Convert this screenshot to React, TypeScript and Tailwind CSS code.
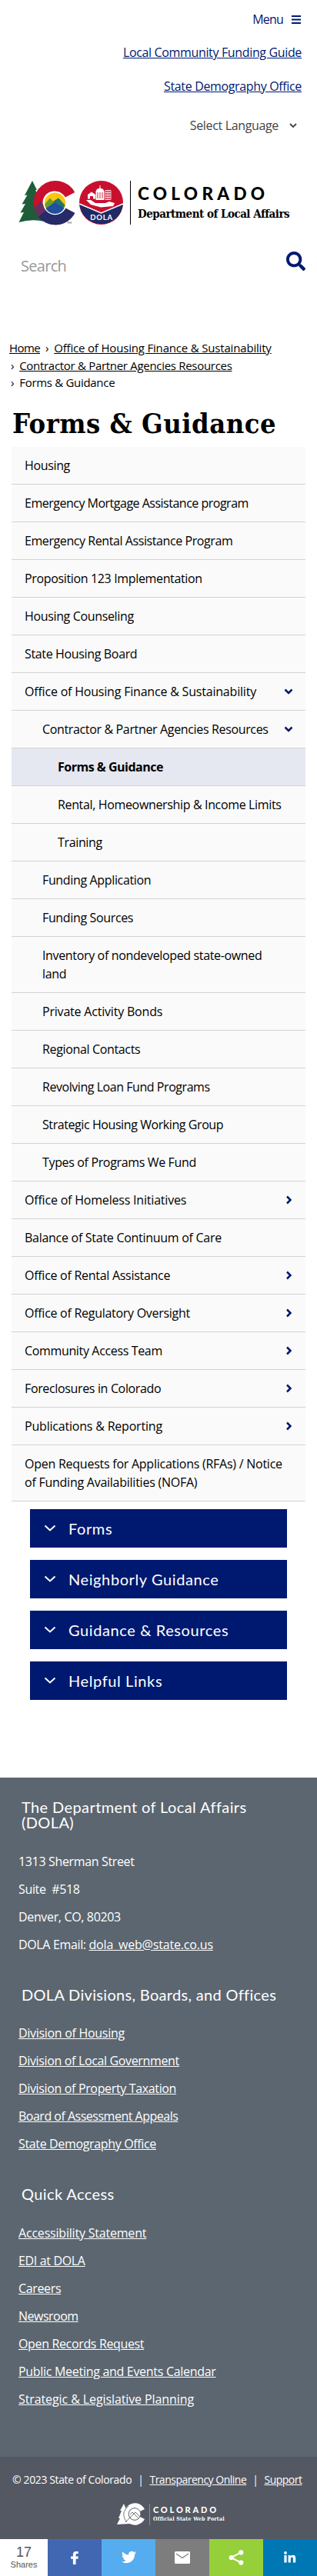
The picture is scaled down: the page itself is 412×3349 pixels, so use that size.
import React from "react";

const body = "font-['Open_Sans','Noto_Sans',sans-serif]";
const museo = "font-['Lato','Open_Sans',sans-serif]";
const slab = "font-['DejaVu_Serif_Condensed','DejaVu_Serif',serif]";

type Item = { label: string; level?: 0 | 1 | 2; icon?: "down" | "right"; active?: boolean; tracking?: string };

const tight = "tracking-[-0.500px]";
const normal = "tracking-[-0.350px]";
const loose = "tracking-[-0.200px]";

const items: Item[] = [
  { label: "Housing" },
  { label: "Emergency Mortgage Assistance program", tracking: tight },
  { label: "Emergency Rental Assistance Program", tracking: "tracking-[-0.420px]" },
  { label: "Proposition 123 Implementation" },
  { label: "Housing Counseling" },
  { label: "State Housing Board" },
  { label: "Office of Housing Finance & Sustainability", icon: "down", tracking: loose },
  { label: "Contractor & Partner Agencies Resources", level: 1, icon: "down" },
  { label: "Forms & Guidance", level: 2, active: true, tracking: tight },
  { label: "Rental, Homeownership & Income Limits", level: 2 },
  { label: "Training", level: 2 },
  { label: "Funding Application", level: 1 },
  { label: "Funding Sources", level: 1 },
  { label: "Inventory of nondeveloped state-owned\nland", level: 1 },
  { label: "Private Activity Bonds", level: 1, tracking: loose },
  { label: "Regional Contacts", level: 1 },
  { label: "Revolving Loan Fund Programs", level: 1, tracking: "tracking-[-0.450px]" },
  { label: "Strategic Housing Working Group", level: 1, tracking: "tracking-[-0.420px]" },
  { label: "Types of Programs We Fund", level: 1 },
  { label: "Office of Homeless Initiatives", icon: "right", tracking: loose },
  { label: "Balance of State Continuum of Care", tracking: "tracking-[-0.280px]" },
  { label: "Office of Rental Assistance", icon: "right", tracking: "tracking-[-0.280px]" },
  { label: "Office of Regulatory Oversight", icon: "right", tracking: "tracking-[-0.280px]" },
  { label: "Community Access Team", icon: "right" },
  { label: "Foreclosures in Colorado", icon: "right" },
  { label: "Publications & Reporting", icon: "right", tracking: loose },
  { label: "Open Requests for Applications (RFAs) / Notice\nof Funding Availabilities (NOFA)", tracking: "tracking-[-0.250px]" },
];

const indent = ["pl-[17px]", "pl-10", "pl-[60px]"];

function Caret({ dir }: { dir: "down" | "right" }) {
  return (
    <svg viewBox="0 0 12 12" className="h-3 w-3 shrink-0" fill="none" stroke="#001970" strokeWidth="2.5">
      <path d={dir === "down" ? "M1.500 3.500 L6 8 L10.500 3.500" : "M4 1.500 L8.500 6 L4 10.500"} />
    </svg>
  );
}

function SideMenu() {
  return (
    <ul className="ml-[15px] w-[382px]">
      {items.map((it) => (
        <li
          key={it.label}
          className={
            "flex items-start justify-between border-b border-[#d3d3d3] py-3 pr-4 " +
            indent[it.level ?? 0] +
            (it.active ? " bg-[#e5e8f0] font-bold" : " bg-[#fafafa]")
          }
        >
          <a className={"whitespace-pre text-base leading-6 text-black " + (it.tracking ?? normal)}>{it.label}</a>
          {it.icon && (
            <span className="flex h-6 items-center">
              <Caret dir={it.icon} />
            </span>
          )}
        </li>
      ))}
    </ul>
  );
}

function LogoMark() {
  return (
    <svg viewBox="24 233 138 61" className="h-[61px] w-[138px] shrink-0">
      <path d="M42 235 L48 247 L46 247 L52 259 L58 288 Q42 284 24.500 289 L31 276 L26.500 276.500 L33 265 L28.500 265.500 L35.500 253.500 L32 254 Z" fill="#1f5c3a" />
      <path d="M97.300 250 A28.500 28.500 0 1 0 97.300 277 L84 270 A15 15 0 1 1 84 257 Z" fill="#c8102e" />
      <path d="M48 279 L58 268 L84 270 L97.300 277 A28.500 28.500 0 0 1 50 282 Z" fill="#262a68" />
      <path d="M44 270 L53 262 L58 268 L60 273 L50 282 Q46 277 44 270 Z" fill="#6a2f5e" />
      <circle cx="71.500" cy="264" r="15.300" fill="#fff" />
      <circle cx="71.500" cy="264" r="13.600" fill="#ffc60b" />
      <path d="M58.500 265 L65 257.500 L69 262 L76 257.500 L84.500 267 A13.600 13.600 0 0 1 59 269 Z" fill="#6b9b2a" />
      <path d="M69 262 L76 257.500 L84.500 267 L80 272 Z" fill="#25756b" />
      <path d="M59.500 271 L71 263 L83.500 270.500 A13.600 13.600 0 0 1 59.500 271 Z" fill="#20509e" />
      <text x="87" y="291" fontSize="4" fontFamily="Lato" fill="#333">TM</text>
      <circle cx="131.500" cy="263.500" r="28.500" fill="#c8102e" />
      <path d="M103.200 265 L131.500 277 L160 265 A28.500 28.500 0 0 1 103.200 265 Z" fill="#1e2a66" />
      <path d="M103.200 265 L131.500 277 L160 265" fill="none" stroke="#fff" strokeWidth="1.500" />
      <path d="M112 260 L118 260 L124 264 L137 264 L142 262 L149 264 L147 268 L131 269.500 L118 266 Z" fill="#fff" />
      <path d="M114 258.500 V253 L119 249.500 L124 253 V258.500 H121 V255 H117 V258.500 Z" fill="#fff" />
      <path d="M124.500 249 Q125 245 130 244.500 Q135 245 135.500 249 V260 H124.500 Z M129.500 241 H130.500 V245 H129.500 Z" fill="#fff" />
      <path d="M127 250 V258 M130 250 V258 M133 250 V258" stroke="#c8102e" strokeWidth="0.900" />
      <path d="M137 247.500 H144 V259.500 H137 Z M139.300 247 V260 M141.700 247 V260 M137 250.500 H144 M137 253.500 H144 M137 256.500 H144" fill="none" stroke="#fff" strokeWidth="0.800" />
      <text x="132" y="286.300" textAnchor="middle" fontSize="9.500" fontWeight="700" letterSpacing="0.800" fontFamily="Lato" fill="#fff">DOLA</text>
    </svg>
  );
}

function Header() {
  return (
    <header className={body}>
      <div className="flex h-[50px] items-center justify-end pr-[21px] text-base tracking-[-0.350px] text-[#001970]">
        <span className="mr-[11px] tracking-[-0.800px]">Menu</span>
        <svg viewBox="0 0 12 11" className="h-[11px] w-3">
          <path d="M0 1h12M0 5.500h12M0 10h12" stroke="#001970" strokeWidth="2" />
        </svg>
      </div>
      <div className="flex flex-col items-end pr-5 text-base tracking-[-0.350px] text-[#001970]">
        <a className="mt-1.5 leading-6 underline">Local Community Funding Guide</a>
        <a className="mt-5 leading-6 underline">State Demography Office</a>
      </div>
      <div className="mt-[27px] flex h-6 items-center justify-end pr-[25px] text-base tracking-[-0.350px] text-[#444]">
        <span className="mr-[13px]">Select Language</span>
        <svg viewBox="0 0 12 12" className="h-3 w-3" fill="none" stroke="#444" strokeWidth="1.800">
          <path d="M2 4 L6 8 L10 4" />
        </svg>
      </div>
      <div className="mt-[58px] flex h-[61px] items-center pl-6">
        <LogoMark />
        <div className="ml-[7px] h-[57px] w-px bg-black" />
        <div className="ml-[9px] flex flex-col whitespace-nowrap text-black">
          <span className={museo + " text-[22.500px] font-black leading-7 tracking-[5.300px]"}>COLORADO</span>
          <span className={slab + " text-[15px] font-bold leading-6 tracking-[-0.500px]"}>Department of Local Affairs</span>
        </div>
      </div>
      <div className="mt-[30px] flex h-12 items-start justify-between pl-[27px] pr-[15px]">
        <span className="mt-2 text-xl leading-7 tracking-[-0.700px] text-[#999]">Search</span>
        <svg viewBox="0 0 512 512" className="mt-[3px] h-[25px] w-[25px] text-[#001970]" fill="currentColor">
          <path d="M505 442.700L405.300 343c-4.500-4.500-10.600-7-17-7H372c27.600-35.300 44-79.700 44-128C416 93.100 322.900 0 208 0S0 93.100 0 208s93.100 208 208 208c48.300 0 92.700-16.400 128-44v16.300c0 6.400 2.500 12.500 7 17l99.700 99.700c9.400 9.400 24.600 9.400 33.900 0l28.300-28.300c9.400-9.400 9.400-24.600.1-34zM208 336c-70.700 0-128-57.200-128-128 0-70.700 57.200-128 128-128 70.700 0 128 57.200 128 128 0 70.700-57.200 128-128 128z" />
        </svg>
      </div>
    </header>
  );
}

function Breadcrumb() {
  return (
    <nav className="mt-[69px] pl-3 text-[15px] leading-[22.500px] tracking-[-0.300px] text-black">
      <div className="flex">
        <a className="tracking-[-0.600px] underline">Home</a>
        <span className="mx-[7px]">›</span>
        <a className="tracking-[-0.180px] underline">Office of Housing Finance &amp; Sustainability</a>
      </div>
      <div className="flex">
        <span className="ml-[2px] mr-[7px]">›</span>
        <a className="underline">Contractor &amp; Partner Agencies Resources</a>
      </div>
      <div className="flex">
        <span className="ml-[2px] mr-[7px]">›</span>
        <span>Forms &amp; Guidance</span>
      </div>
    </nav>
  );
}

function Accordion() {
  return (
    <div className={museo + " ml-[39px] mt-2.5 flex w-[334px] flex-col gap-4"}>
      {["Forms", "Neighborly Guidance", "Guidance & Resources", "Helpful Links"].map((t) => (
        <div key={t} className="flex h-[50px] items-center bg-[#001970] text-xl tracking-[0.600px] text-white">
          <svg viewBox="0 0 16 10" className="ml-[18px] mr-4 h-2.5 w-4" fill="none" stroke="#fff" strokeWidth="2">
            <path d="M1.500 1.500 L8 7.500 L14.500 1.500" />
          </svg>
          {t}
        </div>
      ))}
    </div>
  );
}

type FooterLink = { label: string; tracking: string };

function FooterLinks({ links }: { links: FooterLink[] }) {
  return (
    <ul className="flex flex-col">
      {links.map((l) => (
        <li key={l.label} className="h-9 leading-9">
          <a className={"underline " + l.tracking}>{l.label}</a>
        </li>
      ))}
    </ul>
  );
}

const divisions: FooterLink[] = [
  { label: "Division of Housing", tracking: "tracking-[-0.300px]" },
  { label: "Division of Local Government", tracking: normal },
  { label: "Division of Property Taxation", tracking: normal },
  { label: "Board of Assessment Appeals", tracking: tight },
  { label: "State Demography Office", tracking: normal },
];

const quickAccess: FooterLink[] = [
  { label: "Accessibility Statement", tracking: "tracking-[-0.200px]" },
  { label: "EDI at DOLA", tracking: normal },
  { label: "Careers", tracking: normal },
  { label: "Newsroom", tracking: tight },
  { label: "Open Records Request", tracking: normal },
  { label: "Public Meeting and Events Calendar", tracking: "tracking-[-0.300px]" },
  { label: "Strategic & Legislative Planning", tracking: "tracking-[-0.100px]" },
];

function Footer() {
  return (
    <footer>
      <div className={body + " mt-[101px] h-[883px] bg-[#5c6670] pl-6 pt-7 text-base tracking-[-0.350px] text-white"}>
        <h2 className={museo + " pl-1 text-xl leading-5 tracking-[0.400px]"}>
          The Department of Local Affairs
          <br />
          (DOLA)
        </h2>
        <div className="mt-[23px] whitespace-pre leading-9">
          <p>1313 Sherman Street</p>
          <p>Suite  #518</p>
          <p>Denver, CO, 80203</p>
          <p>
            DOLA Email: <a className="tracking-[-0.180px] underline">dola_web@state.co.us</a>
          </p>
        </div>
        <h2 className={museo + " mb-[22px] mt-[37px] whitespace-nowrap pl-1 text-xl leading-5 tracking-[0.320px]"}>DOLA Divisions, Boards, and Offices</h2>
        <FooterLinks links={divisions} />
        <h2 className={museo + " mb-[23px] mt-[37px] pl-1 text-xl leading-5 tracking-[0.400px]"}>Quick Access</h2>
        <FooterLinks links={quickAccess} />
      </div>
      <div className={body + " h-[107px] bg-[#545862] pt-[18px] text-white"}>
        <div className="flex whitespace-nowrap pl-4 text-sm leading-6 tracking-[-0.500px]">
          <span className="tracking-[-0.380px]">© 2023 State of Colorado</span>
          <span className="mx-2">|</span>
          <a className="underline">Transparency Online</a>
          <span className="mx-2">|</span>
          <a className="underline">Support</a>
        </div>
        <div className="mt-[18px] flex items-center pl-[152px]">
          <svg viewBox="0 0 38 30" className="h-[30px] w-[38px]">
            <path d="M9 1 L13 11 L17 27 L0 28 L4 20 L2 20 L6 10 L4 10 Z" fill="#fff" />
            <path d="M36 8 A14.200 14.200 0 1 0 36 21 L30 18 A8 8 0 1 1 30 11 Z" fill="#fff" />
            <circle cx="23" cy="14.500" r="7.800" fill="#fff" stroke="#545862" strokeWidth="0.800" />
            <path d="M9 12 Q12 6 15 4 M11 25 L19 17 L24 12 L30 18 M17 15 L20 12 L28 20 M9 12 Q8 20 13 25" fill="none" stroke="#545862" strokeWidth="0.800" />
          </svg>
          <div className="ml-1 h-7 w-px bg-[#8a8e96]" />
          <div className="ml-1 flex flex-col">
            <span className={museo + " text-[11px] font-black leading-3 tracking-[2.800px]"}>COLORADO</span>
            <span className={slab + " text-[7px] font-bold leading-3 tracking-[0.220px]"}>Official State Web Portal</span>
          </div>
        </div>
      </div>
    </footer>
  );
}

function ShareBar() {
  return (
    <div className="flex h-12 w-[412px] bg-white">
      <div className="flex w-[62px] flex-col items-center pt-2 font-['Liberation_Sans',Arial,sans-serif] text-[#555]">
        <span className="text-lg leading-[18px]">17</span>
        <span className="text-[11px] leading-[14px]">Shares</span>
      </div>
      <div className="flex flex-1 items-center justify-center bg-[#4267b2]">
        <svg viewBox="0 0 32 32" className="h-6 w-6" fill="#fff">
          <path d="M22 5.200h-3.200c-4 0-5.600 2.200-5.600 5.400V14H9.400v4.400h3.800V28h4.900v-9.600h3.700l.6-4.400h-4.300v-2.600c0-1.300.5-2 2-2H22.600z" />
        </svg>
      </div>
      <div className="flex flex-1 items-center justify-center bg-[#55acee]">
        <svg viewBox="0 0 24 24" className="h-[19px] w-[19px]" fill="#fff">
          <path d="M23.950 4.570a10 10 0 0 1-2.820.77 4.960 4.960 0 0 0 2.160-2.720c-.95.550-2 .950-3.130 1.180a4.920 4.920 0 0 0-8.380 4.480C7.690 8.090 4.070 6.130 1.640 3.160a4.820 4.820 0 0 0-.67 2.480c0 1.710.87 3.210 2.190 4.100a4.900 4.900 0 0 1-2.230-.62v.06a4.920 4.920 0 0 0 3.950 4.830 5 5 0 0 1-2.210.08 4.940 4.940 0 0 0 4.600 3.420A9.870 9.870 0 0 1 0 19.540a14 14 0 0 0 7.550 2.210c9.050 0 14-7.500 14-13.980 0-.21 0-.42-.02-.63a9.940 9.940 0 0 0 2.460-2.550z" />
        </svg>
      </div>
      <div className="flex flex-1 items-center justify-center bg-[#7d7d7d]">
        <svg viewBox="0 0 20 16" className="h-4 w-5">
          <rect width="20" height="16" rx="1.500" fill="#fff" />
          <path d="M2 3 L10 8.500 L18 3" fill="none" stroke="#7d7d7d" strokeWidth="1.300" />
        </svg>
      </div>
      <div className="flex flex-1 items-center justify-center bg-[#95d03a]">
        <svg viewBox="0 0 20 20" className="h-5 w-5" fill="#fff">
          <path d="M16.500 3.200 L3.500 10 L16.500 16.800" fill="none" stroke="#fff" strokeWidth="2" />
          <circle cx="16.300" cy="3.400" r="3.100" />
          <circle cx="3.700" cy="10" r="3.100" />
          <circle cx="16.300" cy="16.600" r="3.100" />
        </svg>
      </div>
      <div className="flex flex-1 items-center justify-center bg-[#0077b5]">
        <svg viewBox="0 0 16 15" className="h-[15px] w-4" fill="#fff">
          <circle cx="2" cy="2" r="1.900" />
          <path d="M.400 5 H3.600 V14.500 H.400 Z M5.600 5 H8.700 V6.300 Q9.600 4.800 11.800 4.800 Q15.200 4.800 15.200 9 V14.500 H12 V9.500 Q12 7.600 10.500 7.600 Q8.800 7.600 8.800 9.600 V14.500 H5.600 Z" />
        </svg>
      </div>
    </div>
  );
}

export default function App() {
  return (
    <div className={body + " h-[3349px] w-[412px] overflow-hidden bg-white"}>
      <Header />
      <Breadcrumb />
      <h1 className={slab + " mb-3 mt-[22px] h-[38px] whitespace-nowrap pl-4 text-4xl font-bold leading-[38px] tracking-[0.500px] text-black"}>
        Forms &amp; Guidance
      </h1>
      <SideMenu />
      <Accordion />
      <Footer />
      <ShareBar />
    </div>
  );
}
